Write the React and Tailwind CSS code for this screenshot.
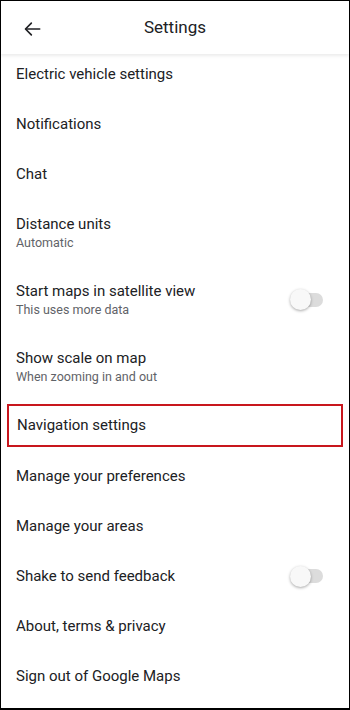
const font = { fontFamily: 'Roboto, "Noto Sans", sans-serif' };

const Toggle = () => (
  <div className="relative w-[33px] h-[22px] flex items-center">
    <div className="absolute right-0 w-[24px] h-[14px] rounded-full bg-[#dcdcdc]" />
    <div className="absolute left-0 w-[21px] h-[21px] rounded-full bg-[#f8f8f8] shadow-[0_1px_3px_rgba(0,0,0,0.35)]" />
  </div>
);

const items = [
  { title: "Notifications" },
  { title: "Chat" },
  { title: "Distance units", sub: "Automatic" },
  { title: "Start maps in satellite view", sub: "This uses more data", toggle: true },
  { title: "Show scale on map", sub: "When zooming in and out" },
  { title: "Navigation settings", highlight: true },
  { title: "Manage your preferences" },
  { title: "Manage your areas" },
  { title: "Shake to send feedback", toggle: true },
  { title: "About, terms & privacy" },
  { title: "Sign out of Google Maps" },
];

const Row = ({ item }) => {
  if (item.highlight) {
    return (
      <div className="h-[51px] flex items-start pt-[4px]">
        <div className="mx-[6px] w-[337px] h-[43px] border-2 border-[#c8161d] flex items-center pl-[8px]">
          <span className="text-[15px] text-[#202124]">{item.title}</span>
        </div>
      </div>
    );
  }
  return (
    <div
      className={`${item.sub ? "h-[67px]" : "h-[50px]"} flex items-center justify-between pl-[15px] pr-[26px]`}
    >
      <div className="flex flex-col">
        <span className="text-[15px] leading-[20px] text-[#202124]">{item.title}</span>
        {item.sub && (
          <span className="text-[12.5px] leading-[17px] text-[#5f6368]">{item.sub}</span>
        )}
      </div>
      {item.toggle && <Toggle />}
    </div>
  );
};

export default function App() {
  return (
    <div
      className="w-[350px] h-[710px] bg-white border border-black border-b-2 overflow-hidden flex flex-col"
      style={font}
    >
      <div className="h-[53px] shrink-0 relative flex items-center justify-center shadow-[0_2px_3px_rgba(0,0,0,0.08)] z-10 bg-white">
        <svg
          className="absolute left-[22px] top-[18px]"
          width="20"
          height="20"
          viewBox="0 0 24 24"
          fill="none"
          stroke="#202124"
          strokeWidth="2"
          strokeLinecap="round"
          strokeLinejoin="round"
        >
          <path d="M20 12H4" />
          <path d="M10 5l-7 7 7 7" />
        </svg>
        <span className="text-[17px] text-[#202124]">Settings</span>
      </div>
      <div className="flex flex-col">
        <div className="h-[45px] flex items-start pt-[10px] pl-[15px]">
          <span className="text-[15px] leading-[20px] text-[#202124]">Electric vehicle settings</span>
        </div>
        {items.map((item) => (
          <Row key={item.title} item={item} />
        ))}
      </div>
    </div>
  );
}
